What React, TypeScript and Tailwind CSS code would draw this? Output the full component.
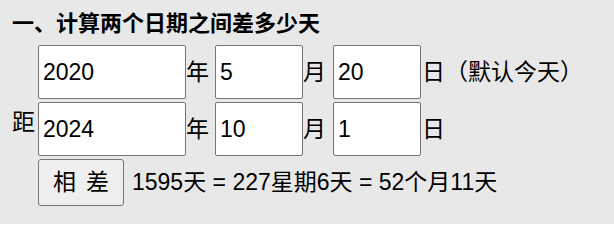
const font = { fontFamily: '"Liberation Sans", "Noto Sans CJK SC", sans-serif' };

const Field: React.FC<{ value: string; wide?: boolean }> = ({ value, wide }) => (
  <input
    defaultValue={value}
    className={
      (wide ? "w-[148px] " : "w-[88px] ") +
      "h-[54px] bg-white border border-[#767676] rounded-[2px] px-[4px] text-[23px] text-black outline-none"
    }
  />
);

export default function App() {
  return (
    <div className="w-full h-[224px] overflow-hidden bg-[#e8e8e8] text-black pl-[12px] pt-[10px]" style={font}>
      <div className="text-[22px] font-bold leading-[28px]">一、计算两个日期之间差多少天</div>
      <div className="flex flex-col gap-[3px] mt-[7px] text-[23px]">
        <div className="flex items-center">
          <span className="w-[26px]" />
          <Field value="2020" wide />
          <span className="w-[29px]">年</span>
          <Field value="5" />
          <span className="w-[30px]">月</span>
          <Field value="20" />
          <span className="pl-[1px]">日（默认今天）</span>
        </div>
        <div className="flex items-center">
          <span className="w-[26px] self-start mt-[3px]">距</span>
          <Field value="2024" wide />
          <span className="w-[29px]">年</span>
          <Field value="10" />
          <span className="w-[30px]">月</span>
          <Field value="1" />
          <span className="pl-[1px]">日</span>
        </div>
        <div className="flex items-center">
          <span className="w-[26px]" />
          <button className="w-[86px] h-[47px] bg-[#efefef] border border-[#767676] rounded-[3px] text-[23px] flex items-center justify-center gap-[10px]">
            <span>相</span>
            <span>差</span>
          </button>
          <span className="ml-[8px]">1595天 = 227星期6天 = 52个月11天</span>
        </div>
      </div>
    </div>
  );
}
